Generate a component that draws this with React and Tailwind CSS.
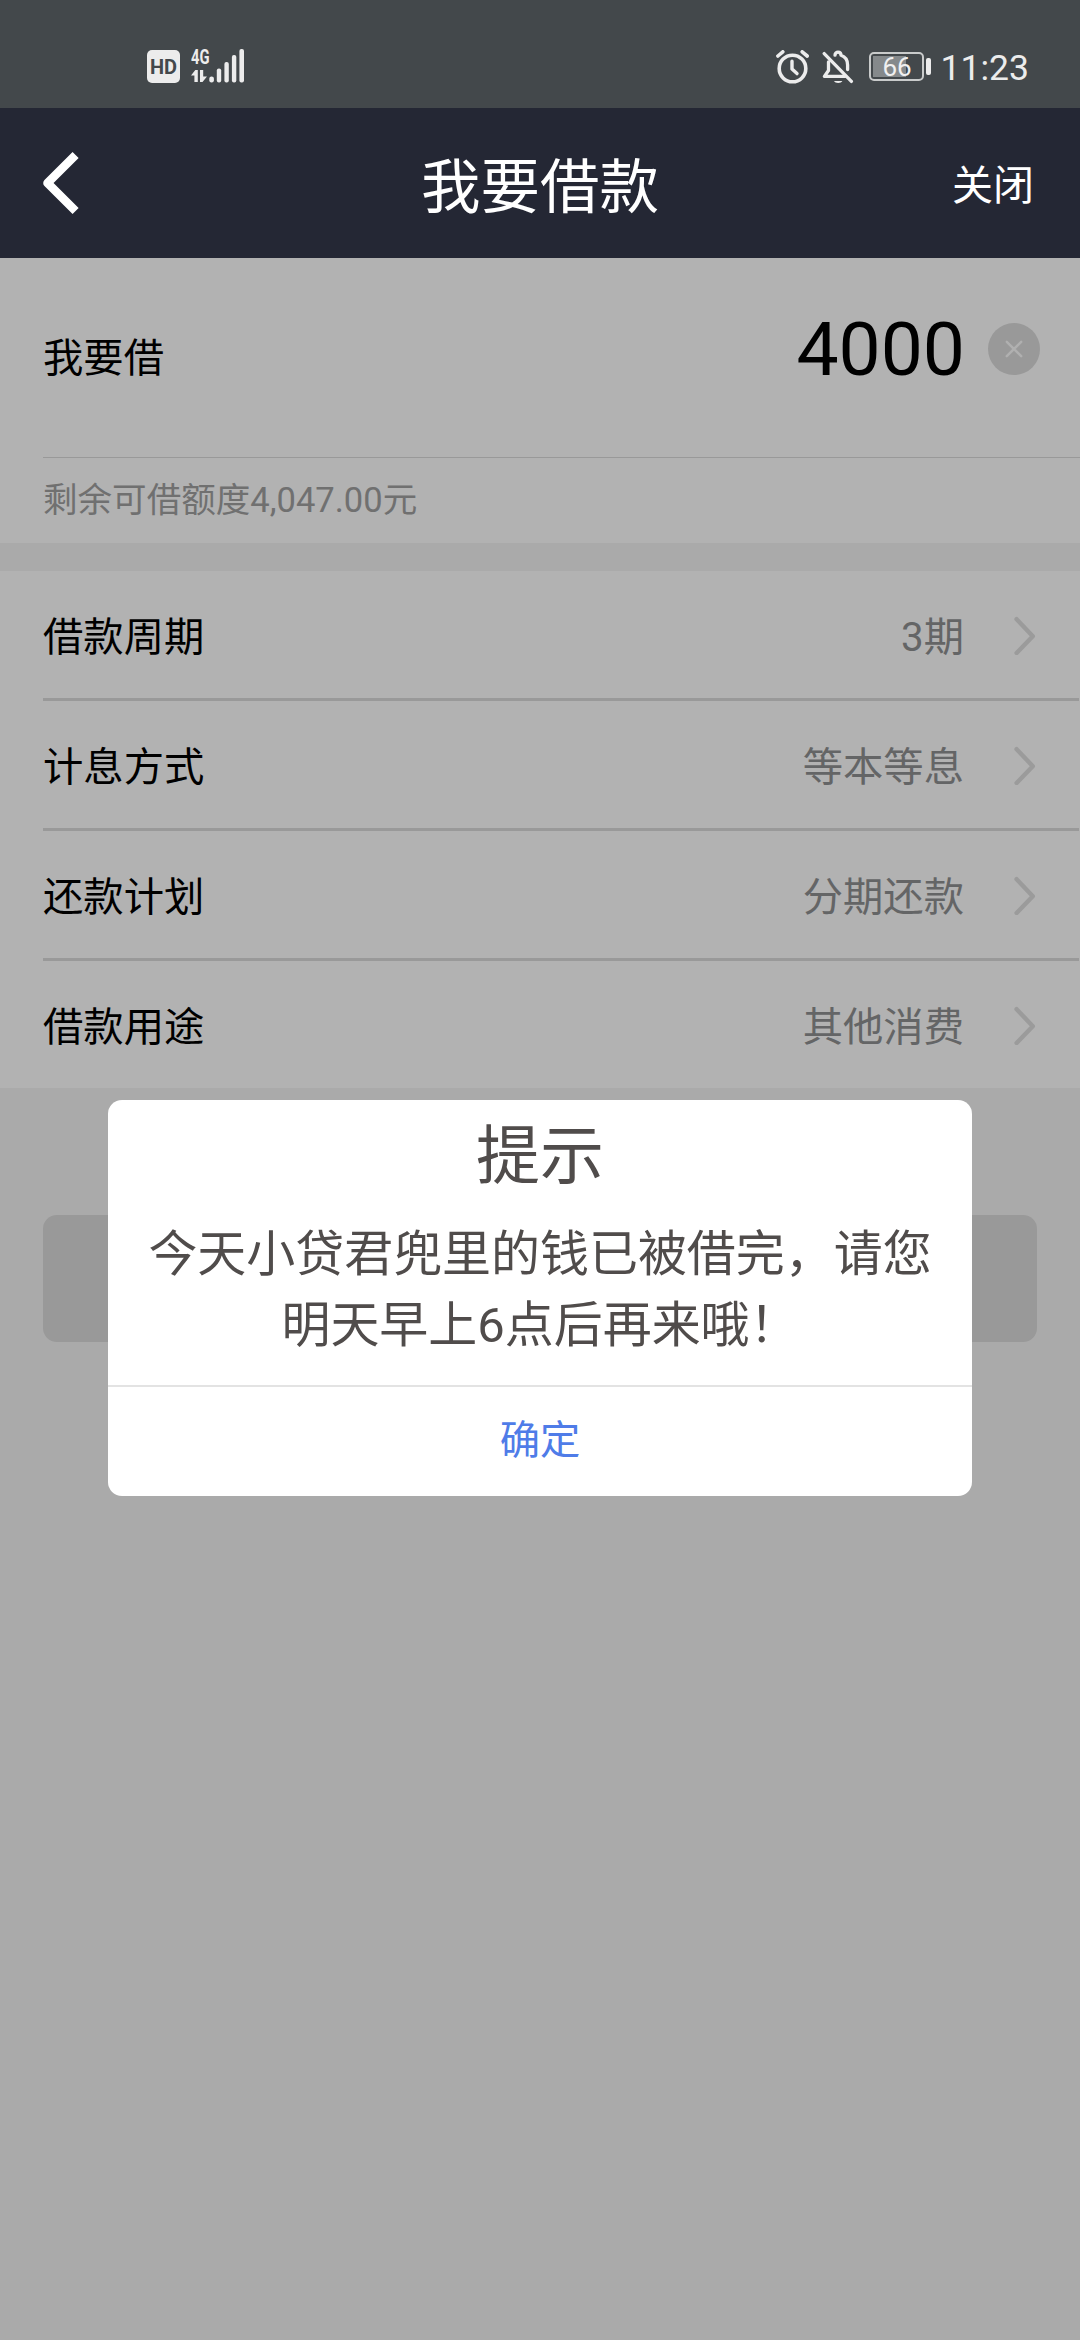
import React from "react";

const rows = [
  { label: "借款周期", value: "3期" },
  { label: "计息方式", value: "等本等息" },
  { label: "还款计划", value: "分期还款" },
  { label: "借款用途", value: "其他消费" },
];

function SignalCluster() {
  return (
    <div className="flex items-start gap-[11px]">
      <div className="mt-px flex h-[33px] w-[33px] items-center justify-center rounded-[5px] bg-[#ececec] text-[20px] leading-none font-bold text-[#43484b]">
        HD
      </div>
      <svg className="-mt-[10px]" width="54" height="44" viewBox="0 -10 54 44" fill="#ececec">
        <text x="0" y="15" fontSize="20" fontWeight="700" textLength="18.5" lengthAdjust="spacingAndGlyphs">
          4G
        </text>
        <path d="M0 26.5 L4.3 21 H6.8 V33 H3.4 V26.5Z" />
        <path d="M9 21 H12.2 V27.5 H16 L11.5 33 H9Z" />
        <rect x="18.3" y="27.5" width="4.6" height="6" rx="2.2" />
        <rect x="25.8" y="19.5" width="4.4" height="14" rx="2" />
        <rect x="33.4" y="13" width="4.4" height="20.5" rx="2" />
        <rect x="40.9" y="6" width="4.4" height="27.5" rx="2" />
        <rect x="48.4" y="0" width="4.6" height="33.5" rx="2" />
      </svg>
    </div>
  );
}

function AlarmIcon() {
  return (
    <svg width="34" height="34" viewBox="0 0 34 34" fill="none" stroke="#ececec" strokeLinecap="round">
      <circle cx="16.5" cy="18.5" r="13.3" strokeWidth="3.6" />
      <path d="M16 11.2V19l5 4.6" strokeWidth="3.4" strokeLinejoin="round" />
      <path d="M1.9 6L6.8 1.8M31.2 6L26.2 1.8" strokeWidth="3.6" />
    </svg>
  );
}

function MutedBellIcon() {
  return (
    <svg width="32" height="34" viewBox="0 0 32 34" fill="none" stroke="#ececec" strokeWidth="3.3" strokeLinecap="round" strokeLinejoin="round">
      <path d="M2.2 3.6L29.4 31.4" />
      <path d="M13 5.2C13 1 19 1 19 5.2C23.4 6.6 25.6 10 25.6 15v4.6" />
      <path d="M6.5 11.8V20.5L2.4 26.4H23" />
      <path d="M12 31h8.4c-1 2.6-7.4 2.6-8.4 0z" fill="#ececec" stroke="none" />
    </svg>
  );
}

function Battery() {
  return (
    <div className="flex items-center gap-[2px]">
      <div className="relative h-[29px] w-[55px] rounded-[5px] border-2 border-[#c9cbcb] p-[2px]">
        <div className="h-[21px] w-[33px] bg-[#85898b]" />
        <span className="absolute inset-0 flex items-center justify-center pl-[2px] text-[26px] leading-none text-[#f0f0f0]">66</span>
      </div>
      <div className="h-[17px] w-[5px] rounded-[2px] bg-[#ececec]" />
    </div>
  );
}

function Chevron() {
  return (
    <svg width="22" height="40" viewBox="0 0 22 40" fill="none" stroke="#9b9b9b" strokeWidth="4.4" strokeLinecap="round" strokeLinejoin="round">
      <path d="M2.6 4.2L18.8 21.2L2.6 38" />
    </svg>
  );
}

export default function App() {
  return (
    <div className="relative h-[2340px] w-[1080px] overflow-hidden bg-[#aaaaaa] font-[Roboto,'Noto_Sans_CJK_SC',sans-serif] text-[40.32px] text-black">
      <div className="flex h-[108px] items-start justify-between bg-[#43484b] pt-[49px] pr-[51px] pl-[147px]">
        <SignalCluster />
        <div className="mt-px flex items-start">
          <AlarmIcon />
          <div className="ml-[12px]">
            <MutedBellIcon />
          </div>
          <div className="mt-[2px] ml-[15px]">
            <Battery />
          </div>
          <span className="ml-[10px] text-[35.5px] leading-[36px] text-[#ececec]">11:23</span>
        </div>
      </div>

      <header className="grid h-[150px] grid-cols-3 items-center bg-[#242734] text-white">
        <svg className="ml-[41px]" width="40" height="64" viewBox="0 0 40 64" fill="none" stroke="#ffffff" strokeWidth="8.6" strokeLinejoin="round">
          <path d="M34.6 4L6.5 32L34.6 60" />
        </svg>
        <h1 className="pt-[9px] text-center text-[59.5px] leading-[80px]">我要借款</h1>
        <button className="mr-[46px] pt-[6px] text-right text-[41px] leading-[60px]">关闭</button>
      </header>

      <section className="h-[285px] bg-[#b2b2b2]">
        <div className="ml-[43px] flex h-[200px] items-start justify-between border-b border-[#999999] pr-[40px]">
          <span className="mt-[71px] leading-[60px]">我要借</span>
          <div className="mt-[51px] flex items-center">
            <span className="text-[75px] leading-[80px]">4000</span>
            <div className="ml-[23px] flex h-[52px] w-[52px] items-center justify-center rounded-full bg-[#999999]">
              <svg width="20" height="20" viewBox="0 0 20 20" stroke="#b0b0b0" strokeWidth="2.4" strokeLinecap="round">
                <path d="M2.8 2.8L17.2 17.2M17.2 2.8L2.8 17.2" />
              </svg>
            </div>
          </div>
        </div>
        <p className="ml-[43px] pt-[17px] text-[34.56px] leading-[50px] text-[#707070]">剩余可借额度4,047.00元</p>
      </section>

      <section className="mt-[28px] h-[517px] bg-[#b2b2b2]">
        {rows.map((row) => (
          <div key={row.label} className="mr-px ml-[43px] flex h-[130px] items-center border-b-[3px] border-[#999999] pr-[43px] last:h-[127px] last:border-b-0">
            <span className="pt-[7px] leading-[60px]">{row.label}</span>
            <span className="ml-auto pt-[7px] leading-[60px] text-[#646566]">{row.value}</span>
            <div className="ml-[50px]">
              <Chevron />
            </div>
          </div>
        ))}
      </section>

      <div className="mx-[43px] mt-[127px] h-[127px] rounded-[14px] bg-[#999999]" />

      <div className="absolute top-[1099.5px] left-[108px] flex h-[396px] w-[864px] flex-col rounded-[14px] bg-white text-center text-[#504c4b]">
        <h2 className="mt-[14px] text-[64px] leading-[86px]">提示</h2>
        <p className="mt-[19px] text-[48.96px] leading-[71px]">
          今天小贷君兜里的钱已被借完，请您
          <br />
          明天早上6点后再来哦！
        </p>
        <button className="mt-auto h-[110.5px] border-t-2 border-[#e3e3e3] text-[#4f7ce8]">确定</button>
      </div>
    </div>
  );
}
